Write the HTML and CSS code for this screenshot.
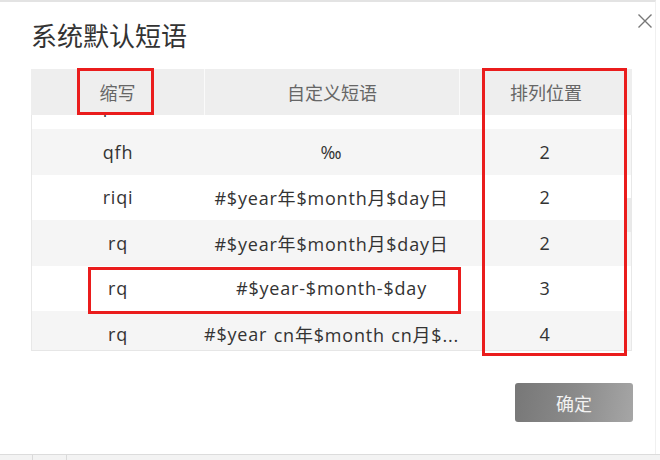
FILE: index.html
```html
<!DOCTYPE html>
<html lang="zh-CN">
<head>
<meta charset="utf-8">
<title>系统默认短语</title>
<link rel="stylesheet" href="styles.css">
</head>
<body>
<div class="page">
  <div class="dialog">
    <svg class="close" width="16" height="16" viewBox="0 0 16 16"><path d="M1.5 1.5 L14.5 14.5 M14.5 1.5 L1.5 14.5" stroke="#777" stroke-width="1.4" fill="none"/></svg>
    <h1 class="title">系统默认短语</h1>
    <div class="table">
      <div class="thead">
        <div class="th">缩写</div>
        <div class="th">自定义短语</div>
        <div class="th">排列位置</div>
      </div>
      <div class="tbody">
        <div class="rows">
          <div class="tr"><div class="td">pfh</div><div class="td"></div><div class="td"></div></div>
          <div class="tr"><div class="td">qfh</div><div class="td">‰</div><div class="td">2</div></div>
          <div class="tr"><div class="td">riqi</div><div class="td">#$year年$month月$day日</div><div class="td">2</div></div>
          <div class="tr"><div class="td">rq</div><div class="td">#$year年$month月$day日</div><div class="td">2</div></div>
          <div class="tr"><div class="td">rq</div><div class="td">#$year-$month-$day</div><div class="td">3</div></div>
          <div class="tr"><div class="td">rq</div><div class="td">#$year<span class="gap"></span>cn年$month<span class="gap"></span>cn月$...</div><div class="td">4</div></div>
        </div>
        <div class="thumb"></div>
      </div>
    </div>
    <div class="footer">
      <button class="ok">确定</button>
    </div>
  </div>
  <div class="taskbar">
    <div class="cell c1"></div>
    <div class="cell c2"></div>
    <div class="cell c3"></div>
  </div>
  <div class="mark mark-abbr"></div>
  <div class="mark mark-order"></div>
  <div class="mark mark-row"></div>
</div>
</body>
</html>
```

FILE: styles.css
```css
* { box-sizing: border-box; margin: 0; padding: 0; }
html, body { width: 660px; height: 460px; overflow: hidden; }
body {
  background: #fff;
  font-family: "Open Sans", "Noto Sans CJK SC", sans-serif;
  color: #333;
}
.page {
  position: relative;
  width: 660px;
  height: 460px;
  display: flex;
  flex-direction: column;
}
.dialog {
  position: relative;
  flex: 1;
  width: 656px;
  border-top: 2px solid #e3e3e3;
  border-right: 1px solid #f0f0f0;
  padding: 15px 0 0 31px;
  display: flex;
  flex-direction: column;
  background: #fff;
}
.close {
  position: absolute;
  left: 637px;
  top: 11px;
}
.title {
  font-family: "Noto Sans CJK SC", sans-serif;
  font-weight: 400;
  font-size: 26px;
  line-height: 36px;
  color: #333;
}
.table {
  margin-top: 16px;
  width: 601px;
}
.thead {
  display: grid;
  grid-template-columns: 173px 255px 173px;
  height: 46px;
  background: #eeeeee;
}
.th {
  font-family: "Noto Sans CJK SC", sans-serif;
  font-size: 18px;
  color: #666;
  display: flex;
  align-items: center;
  justify-content: center;
  border-left: 1px solid #fafafa;
}
.th:first-child { border-left: none; }
.tbody {
  position: relative;
  height: 236px;
  overflow: hidden;
  border-left: 1px solid #e8e8e8;
  border-right: 1px solid #e8e8e8;
  border-bottom: 1px solid #e6e6e6;
}
.rows { margin-top: -31.5px; }
.tr {
  display: grid;
  grid-template-columns: 172px 255px 172px;
  height: 45.5px;
  background: #fff;
}
.tr:nth-child(even) { background: #f5f5f5; }
.td {
  font-size: 18px;
  letter-spacing: 0.8px;
  color: #333;
  display: flex;
  align-items: center;
  justify-content: center;
  white-space: nowrap;
}
.gap { display: inline-block; width: 8px; }
.thumb {
  position: absolute;
  right: 0;
  top: 83px;
  width: 6px;
  height: 34px;
  background: #e9e9e9;
  border-radius: 3px 0 0 3px;
}
.footer {
  display: flex;
  justify-content: flex-end;
  padding-right: 22px;
  margin-top: 32px;
}
.ok {
  width: 118px;
  height: 39px;
  border: none;
  border-radius: 3px;
  background: linear-gradient(100deg, #777 0%, #8a8a8a 50%, #a6a6a6 100%);
  color: #f2f2f2;
  font-family: "Noto Sans CJK SC", sans-serif;
  font-size: 18px;
}
.taskbar {
  height: 6px;
  border-top: 1px solid #dcdcdc;
  background: #f3f3f3;
  display: flex;
}
.cell { height: 100%; }
.c1 { width: 32px; }
.c2 { width: 34px; border-left: 1px solid #dadada; }
.c3 { flex: 1; border-left: 1px solid #dadada; }
.mark {
  position: absolute;
  border: 3px solid #ea1c1c;
}
.mark-abbr { left: 77px; top: 68px; width: 77px; height: 47px; }
.mark-order { left: 482px; top: 68px; width: 145px; height: 288px; }
.mark-row { left: 88px; top: 267px; width: 373px; height: 47px; }
```
